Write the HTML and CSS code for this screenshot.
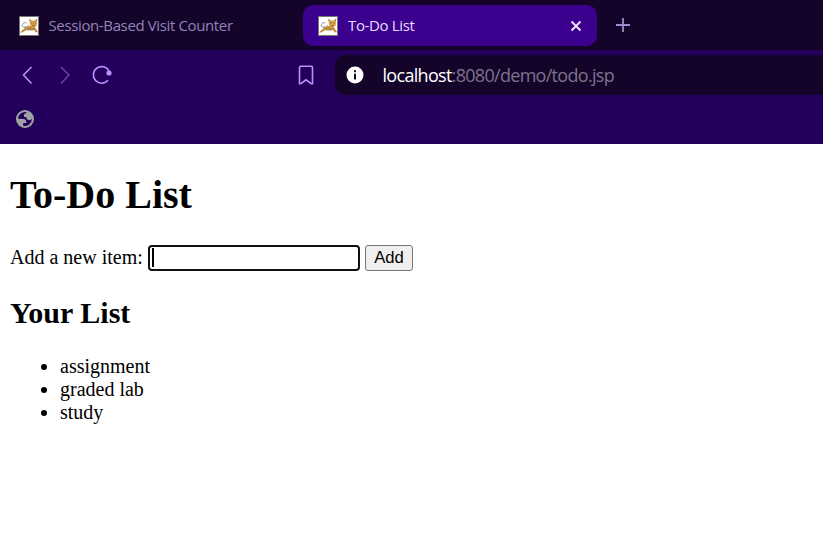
FILE: index.html
```html
<!DOCTYPE html>
<html lang="en">
<head>
<meta charset="utf-8">
<title>To-Do List</title>
<link rel="stylesheet" href="styles.css">
</head>
<body>
<svg class="defs" aria-hidden="true">
  <symbol id="cat" viewBox="0 0 20 20">
    <rect width="20" height="20" fill="#777"/>
    <rect x="1" y="1" width="18" height="18" fill="#fff"/>
    <path d="M6.500 11C3.500 11.500 2.500 10 3.500 8.500S5.500 6 7.500 7" fill="none" stroke="#777" stroke-width=".8"/>
    <path d="M1 16.500L4 13.500 8 11 12 9.500 16 11 17 13 19 16 17 16.500 15 14 8 13.800 3 16.500Z" fill="#bf8a38"/>
    <path d="M10.500 3L12.500 4.500H15.500L17.800 3 18 9 15.500 11.500 12 11 10.800 8Z" fill="#d8a548"/>
    <path d="M5 12L10 9.500M8 14h6" fill="none" stroke="#6d5430" stroke-width=".6"/>
    <path d="M10.500 3l1 2M18 3l-1 2M12 7h1.500M15.500 7H17M13 9.500h3" fill="none" stroke="#6b5431" stroke-width=".7"/>
  </symbol>
</svg>
<header class="tabs">
  <div class="tab"><svg class="favicon"><use href="#cat"/></svg><span class="tab-title long">Session-Based Visit Counter</span></div>
  <div class="tab active"><svg class="favicon"><use href="#cat"/></svg><span class="tab-title">To-Do List</span>
    <svg class="close" viewBox="0 0 12 12"><path d="M1.500 1.500l9 9M10.500 1.500l-9 9"/></svg>
  </div>
  <svg class="plus" viewBox="0 0 14 14"><path d="M7 0v14M0 7h14"/></svg>
</header>
<nav class="toolbar">
  <div class="controls">
    <svg class="icon back" viewBox="0 0 20 20"><path d="M13.500 2L5.500 10l8 8.500"/></svg>
    <svg class="icon forward" viewBox="0 0 20 20"><path d="M6 2l8 8-8 8.500"/></svg>
    <svg class="icon reload" viewBox="0 0 20 20"><path d="M16 15.300A8.300 8.300 0 1 1 17 6"/><circle cx="17" cy="8" r="2.600"/></svg>
    <svg class="icon bookmark" viewBox="0 0 20 20"><path d="M5 1.200h10q1.500 0 1.500 1.500v16h-1.300L10 14.800 4.800 18.700H3.500v-16q0-1.500 1.500-1.500Z"/></svg>
    <div class="address">
      <svg class="info" viewBox="0 0 18 18"><circle cx="9" cy="9" r="8.500" fill="#fff"/><path d="M9 4.200v2M9 7.800v5.600" stroke="#16052b" stroke-width="2"/></svg>
      <span class="url"><b>localhost</b>:8080/demo/todo.jsp</span>
    </div>
  </div>
  <svg class="globe" viewBox="0 0 18 18"><circle cx="9" cy="9" r="9"/><path class="sea" d="M2 8.800A7 7 0 0 1 10.300 2.200V3.200C8.800 3.200 8 4 8 5.500V7H10.300C10.300 9 11.200 10 13 10 14.300 10 15.300 9.600 15.900 8.800A7 7 0 0 1 7 15.700V13H10.300C10.300 10.300 9 9 6.500 8.900Z"/><path d="M2 8.900H6.500C9 9 10.300 10.300 10.300 12.800H7.200V15.800A7 7 0 0 1 2 8.900Z"/></svg>
</nav>
<main>
  <h1>To-Do List</h1>
  <form><label for="item">Add a new item:</label><span class="field"><i class="caret"></i><input id="item" type="text"></span><button type="button">Add</button></form>
  <h2>Your List</h2>
  <ul><li>assignment</li><li>graded lab</li><li>study</li></ul>
</main>
</body>
</html>
```

FILE: styles.css
```css
* { box-sizing: border-box; }
body { margin: 0; background: #fff; color: #000; font: 20px/23px "Liberation Serif", serif; overflow: hidden; }
svg { display: block; flex: none; }
.defs { display: none; }
.tabs { display: flex; height: 50px; padding: 5px 0 4px 4px; background: #150429; font-family: "Open Sans", "Noto Sans", sans-serif; }
.tab { display: flex; align-items: center; width: 299px; height: 41px; padding-left: 15px; color: #9480bd; border-radius: 10px; }
.tab.active { width: 294px; padding-right: 15px; color: #e7dcff; background: #3b008e; }
.favicon { width: 20px; height: 20px; margin-right: 10px; }
.tab-title { padding-bottom: 2px; font-size: 15px; line-height: 20px; letter-spacing: -.35px; white-space: nowrap; }
.tab-title.long { margin-left: -.5px; letter-spacing: -.37px; }
.close { width: 12px; height: 12px; margin-left: auto; fill: none; stroke: #f0e9ff; stroke-width: 1.8; }
.plus { width: 14px; height: 14px; margin: 13px 0 0 19px; fill: none; stroke: #a18acd; stroke-width: 1.8; }
.toolbar { height: 94px; padding-top: 5px; background: #24005d; }
.controls { display: flex; align-items: center; height: 40px; padding-left: 18px; }
.icon { width: 20px; height: 20px; fill: none; stroke: #b692ff; stroke-width: 1.6; }
.forward { margin-left: 17px; stroke: #6640a4; }
.reload { margin-left: 17px; }
.reload circle { fill: #b692ff; stroke: none; }
.bookmark { margin-left: 184px; }
.address { display: flex; align-items: center; flex: 1; height: 40px; margin-left: 19px; padding-left: 11px; background: #150429; border-radius: 10px 0 0 10px; }
.info { width: 18px; height: 18px; }
.url { margin-left: 18.5px; padding-bottom: 1px; color: #7c738c; font: 18px/24px "Open Sans", "Noto Sans", sans-serif; letter-spacing: -.7px; white-space: nowrap; }
.url b { color: #fff; font-weight: 400; }
.globe { width: 18px; height: 18px; margin: 15px 0 0 16px; fill: #a0a3a5; }
.globe .sea { fill: #24005d; }
main { padding: 28px 10px 0; }
h1 { margin: 0; font-size: 40px; line-height: 46px; }
form { display: flex; height: 26px; margin-top: 27px; }
label { line-height: 24px; width: 138px; white-space: nowrap; }
.field { position: relative; width: 212px; height: 26px; }
input { display: block; width: 100%; height: 100%; margin: 0; padding: 0; background: #fff; border: 2px solid #101010; border-radius: 4px; outline: 0; }
.caret { position: absolute; left: 4px; top: 3px; width: 2px; height: 19px; background: #000; }
button { width: 48px; height: 26px; margin: 0 0 0 5px; padding: 0; font: 16.667px/22px "Liberation Sans", sans-serif; color: #000; background: #efefef; border: 1px solid #767676; border-radius: 3px; }
h2 { margin: 25px 0 0; font-size: 30px; line-height: 34px; }
ul { margin: 25px 0 0; padding-left: 50px; }
```
